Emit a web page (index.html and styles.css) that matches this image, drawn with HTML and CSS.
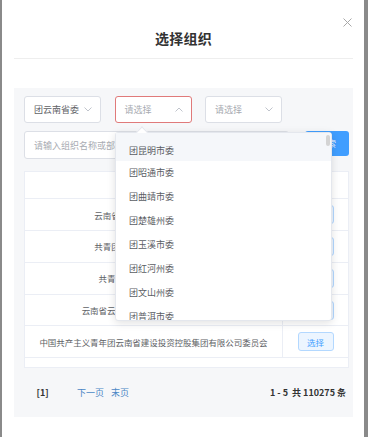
FILE: index.html
```html
<!DOCTYPE html>
<html lang="zh">
<head>
<meta charset="utf-8">
<link rel="stylesheet" href="styles.css">
</head>
<body>
<div class="modal">
  <div class="header">
    <h1 class="title">选择组织</h1>
    <span class="close">
      <svg width="9" height="9" viewBox="0 0 9 9"><path d="M0.5 0.5L8.5 8.5M8.5 0.5L0.5 8.5" stroke="#a8a8a8" stroke-width="1" fill="none"/></svg>
    </span>
  </div>
  <div class="panel">
    <div class="filters">
      <div class="select">
        <span class="value">团云南省委</span>
        <svg class="chev" width="8" height="5" viewBox="0 0 8 5"><path d="M0.5 0.5L4 4L7.5 0.5" stroke="#c0c4cc" fill="none"/></svg>
      </div>
      <div class="select active">
        <span class="ph">请选择</span>
        <svg class="chev" width="8" height="5" viewBox="0 0 8 5"><path d="M0.5 4.5L4 1L7.5 4.5" stroke="#c0c4cc" fill="none"/></svg>
      </div>
      <div class="select">
        <span class="ph">请选择</span>
        <svg class="chev" width="8" height="5" viewBox="0 0 8 5"><path d="M0.5 0.5L4 4L7.5 0.5" stroke="#c0c4cc" fill="none"/></svg>
      </div>
    </div>
    <div class="search">
      <div class="input"><span class="ph">请输入组织名称或部门名称</span></div>
      <button class="btn">搜索</button>
    </div>
    <div class="table">
      <div class="row head"><div class="c1">组织名称</div><div class="c2">操作</div></div>
      <div class="row"><div class="c1">云南省青少年发展基金会理事会</div><div class="c2"><span class="pick">选择</span></div></div>
      <div class="row"><div class="c1">共青团云南省委直属机关委员会</div><div class="c2"><span class="pick">选择</span></div></div>
      <div class="row"><div class="c1">共青团云南省卫生健康委员会</div><div class="c2"><span class="pick">选择</span></div></div>
      <div class="row"><div class="c1">云南省云南白药集团股份有限公司团委</div><div class="c2"><span class="pick">选择</span></div></div>
      <div class="row"><div class="c1">中国共产主义青年团云南省建设投资控股集团有限公司委员会</div><div class="c2"><span class="pick">选择</span></div></div>
    </div>
    <div class="pager">
      <span class="cur">[1]</span>
      <a class="lnk">下一页</a>
      <a class="lnk">末页</a>
      <span class="total">1 - 5&nbsp; 共 110275 条</span>
    </div>
  </div>

  <div class="dropdown">
    <span class="arrow"></span>
    <span class="thumb"></span>
    <ul class="list">
      <li class="hover">团昆明市委</li>
      <li>团昭通市委</li>
      <li>团曲靖市委</li>
      <li>团楚雄州委</li>
      <li>团玉溪市委</li>
      <li>团红河州委</li>
      <li>团文山州委</li>
      <li>团普洱市委</li>
    </ul>
  </div>
</div>
</body>
</html>
```

FILE: styles.css
```css
* { box-sizing: border-box; }
html, body {
  margin: 0;
  padding: 0;
  height: 437px;
  overflow: hidden;
}
body {
  background: #8a8a8a;
  font-family: "Noto Sans CJK SC", "Noto Sans", "Liberation Sans", sans-serif;
  color: #606266;
}
.modal {
  position: relative;
  margin-left: 2px;
  width: 362px;
  height: 437px;
  background: #fff;
}
.header {
  margin: 0 11px 0 12px;
  height: 59px;
  border-bottom: 1px solid #eeeeee;
  padding-top: 28px;
}
.title {
  margin: 0;
  text-align: center;
  font-size: 14px;
  line-height: 20px;
  font-weight: 700;
  color: #333;
  letter-spacing: 0.3px;
}
.close {
  position: absolute;
  left: 341px;
  top: 18px;
  width: 9px;
  height: 9px;
  display: block;
}
.close svg { display: block; }
.panel {
  margin: 29px 11px 0 12px;
  height: 329px;
  background: #f6f7f9;
  padding: 8px 4px 0 10px;
}
.filters {
  display: flex;
  gap: 13.5px;
}
.select {
  width: 77px;
  height: 27px;
  background: #fff;
  border: 1px solid #dcdfe6;
  border-radius: 3px;
  display: flex;
  align-items: center;
  justify-content: space-between;
  padding: 0 8px 0 9px;
  font-size: 9px;
}
.select.active { border-color: #e07a7a; }
.value { color: #606266; }
.ph { color: #a8abb2; font-size: 9px; }
.chev { display: block; }
.search {
  margin-top: 8px;
  display: flex;
  align-items: flex-start;
  gap: 16px;
}
.input {
  width: 265px;
  height: 28px;
  background: #fff;
  border: 1px solid #dcdfe6;
  border-radius: 3px;
  display: flex;
  align-items: center;
  padding-left: 9px;
}
.btn {
  width: 44px;
  height: 25px;
  border: none;
  border-radius: 3px;
  background: #409eff;
  color: #fff;
  font-family: inherit;
  font-size: 9px;
  padding: 0;
}
.table {
  margin-top: 12px;
  width: 325px;
  height: 197px;
  background: #fff;
  border: 1px solid #ebeef5;
}
.row {
  display: flex;
  height: 31.8px;
  border-bottom: 1px solid #ebeef5;
  font-size: 8.5px;
  color: #606266;
}
.row.head { height: 27.3px; color: #909399; font-weight: 700; }
.c1 {
  width: 258px;
  display: flex;
  align-items: center;
  justify-content: center;
  border-right: 1px solid #ebeef5;
  white-space: nowrap;
  letter-spacing: -0.05px;
}
.row.head .c1, .row.head .c2 { border-right: none; }
.c2 {
  flex: 1;
  display: flex;
  align-items: center;
  justify-content: center;
}
.pick {
  width: 36px;
  height: 19px;
  display: flex;
  align-items: center;
  justify-content: center;
  background: #ecf5ff;
  border: 1px solid #b3d8ff;
  border-radius: 3px;
  color: #409eff;
  font-size: 8.5px;
}
.pager {
  height: 49px;
  display: flex;
  align-items: center;
  font-size: 9px;
  padding-left: 12.5px;
  padding-right: 3px;
}
.cur { color: #333; font-weight: 700; width: 40.5px; }
.lnk { color: #4a86c5; margin-right: 7px; }
.total { margin-left: auto; color: #333; font-weight: 700; }
.dropdown {
  position: absolute;
  left: 113px;
  top: 132px;
  width: 217px;
  height: 189px;
  background: #fff;
  border: 1px solid #e4e7ed;
  border-radius: 3px;
  box-shadow: 0 2px 8px rgba(0, 0, 0, 0.12);
  overflow: visible;
}
.arrow {
  position: absolute;
  left: 22px;
  top: -5px;
  width: 8px;
  height: 8px;
  background: #fff;
  border-left: 1px solid #e4e7ed;
  border-top: 1px solid #e4e7ed;
  transform: rotate(45deg);
}
.thumb {
  position: absolute;
  right: 1px;
  top: 2px;
  width: 4px;
  height: 11px;
  border-radius: 2px;
  background: #d4d4d4;
  z-index: 2;
}
.list {
  list-style: none;
  margin: 0;
  padding: 0;
  height: 187px;
  overflow: hidden;
  position: relative;
}
.list li {
  height: 24px;
  line-height: 24px;
  padding-left: 13px;
  font-size: 9px;
  color: #5a5d63;
}
.list li.hover {
  height: 28px;
  line-height: 20px;
  padding-top: 8px;
  background: #f5f7fa;
}
```
